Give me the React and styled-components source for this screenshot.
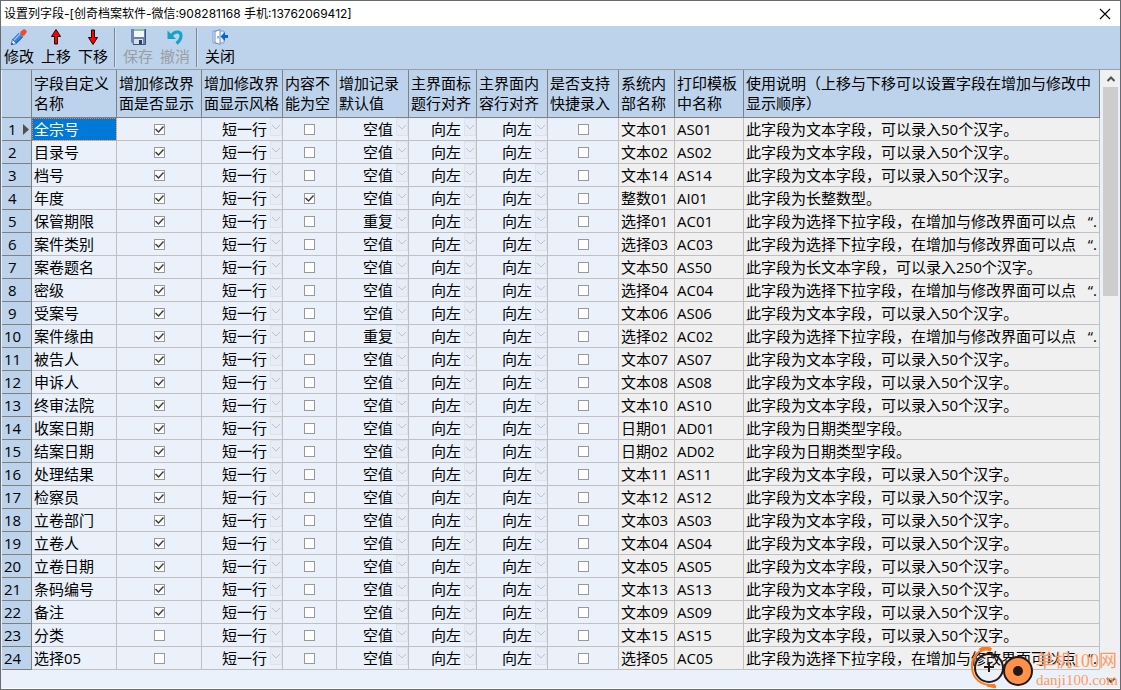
import React, { useState } from "react";
import styled, { createGlobalStyle } from "styled-components";

const Global = createGlobalStyle`
  * { box-sizing: border-box; }
  body { margin: 0; background: #fff; color: #000; }
  body, button, select, input { font-family: "Open Sans", "Noto Sans CJK SC", sans-serif; font-size: 15px; }
`;

const Window = styled.div`
  position: relative;
  display: flex;
  flex-direction: column;
  min-height: 100vh;
  border: 1px solid #676b72;
  background: #bcd3eb;
`;
const TitleBar = styled.header`
  display: flex;
  align-items: center;
  justify-content: space-between;
  height: 25px;
  padding: 0 8px 0 3px;
  background: #fff;
`;
const Title = styled.h1`
  margin: 0;
  font: 400 12px/20px Inter, "Noto Sans CJK SC", sans-serif;
  white-space: nowrap;
`;
const CloseButton = styled.button`
  display: flex;
  padding: 0;
  border: 0;
  background: none;
`;
const Toolbar = styled.nav`
  display: flex;
  gap: 1px;
  height: 44px;
  border-bottom: 1px solid #9a9fa5;
  background: #bcd3eb;
`;
const ToolButton = styled.button`
  display: flex;
  flex-direction: column;
  align-items: center;
  padding: 2px 3px 0;
  border: 0;
  background: none;
  color: #000;
  line-height: 20px;
  white-space: nowrap;
  &:disabled { color: #9b9ea3; }
  svg { display: block; }
`;
const Separator = styled.span`
  width: 2px;
  height: 39px;
  margin: 2px 3px 0 2px;
  border-left: 1px solid #7d868f;
  border-right: 1px solid #d3e2f2;
`;
const Body = styled.main`
  display: flex;
  flex: 1;
  padding-left: 1px;
  background: #eaf1fa;
  border-bottom: 1px solid #fff;
`;
const TableArea = styled.div`
  flex: 1;
  min-width: 0;
`;
const Table = styled.table`
  width: 100%;
  table-layout: fixed;
  border-collapse: separate;
  border-spacing: 0;
`;
const Col = styled.col`
  width: ${(p) => (p.$w ? `${p.$w}px` : "auto")};
`;
const HeadCell = styled.th`
  height: 48px;
  padding: 3px 0 4px 2px;
  border-right: 1px solid #808080;
  border-bottom: 1px solid #808080;
  background: #bcd3eb;
  font-weight: 400;
  line-height: 20px;
  text-align: left;
  vertical-align: top;
  white-space: pre-line;
`;
const RowHead = styled.th`
  height: 23px;
  padding: 0 2px;
  border-right: 1px solid #808080;
  border-bottom: 1px solid #808080;
  background: #bcd3eb;
  font-weight: 400;
  line-height: 22px;
  text-align: left;
`;
const RowMark = styled.span`
  display: flex;
  align-items: center;
  justify-content: space-between;
  padding-left: ${(p) => (p.$single ? "4px" : "0")};
`;
const Cell = styled.td`
  height: 23px;
  padding: 0 0 0 2px;
  border-right: 1px solid #c0c0c0;
  border-bottom: 1px solid #c0c0c0;
  background: ${(p) => (p.$locked ? "#f0f0f0" : "#eaf1fa")};
  line-height: 22px;
  overflow: hidden;
  white-space: pre;
`;
const SelectedCell = styled(Cell)`
  background: #0078d7;
  color: #fff;
  outline: 1px dotted #ff8728;
  outline-offset: -1px;
`;
const CheckCell = styled(Cell)`
  padding: 0;
`;
const CheckBox = styled.label`
  display: flex;
  justify-content: center;
  input {
    width: 11px;
    height: 11px;
    margin: 0;
    appearance: none;
    border: 1px solid #999;
    background: #fff;
  }
  svg { position: absolute; pointer-events: none; }
`;
const Picker = styled.span`
  display: flex;
  height: 22px;
`;
const Select = styled.select`
  flex: 1;
  min-width: 0;
  height: 22px;
  padding: 0 3px 0 0;
  border: 0;
  appearance: none;
  background: none;
  color: #000;
  line-height: 22px;
  text-align: right;
  text-align-last: right;
`;
const Drop = styled.span`
  display: flex;
  align-items: center;
  justify-content: center;
  width: 12px;
  height: 18px;
  border: 1px solid #dde3ec;
  background: #e6edf6;
`;
const Scrollbar = styled.div`
  display: flex;
  flex-direction: column;
  align-items: center;
  width: 15px;
  margin: 0 2px 0 3px;
  background: #f0f0f0;
`;
const ScrollButton = styled.button`
  display: flex;
  align-items: center;
  justify-content: center;
  width: 100%;
  height: 17px;
  padding: 0;
  border: 0;
  background: none;
`;
const Thumb = styled.div`
  width: 100%;
  height: 209px;
  background: #cdcdcd;
`;
const Track = styled.div`
  flex: 1;
`;
const Watermark = styled.div`
  position: absolute;
  right: 2px;
  bottom: 0;
  display: flex;
  align-items: flex-end;
  gap: 2px;
  color: #ff9a62;
  font-family: "Liberation Serif", "Noto Sans CJK SC", serif;
  pointer-events: none;
`;
const MarkText = styled.div`
  font-size: 15px;
  line-height: 18px;
  white-space: nowrap;
  strong { display: block; font-size: 18px; line-height: 20px; font-weight: 400; }
`;

const PencilIcon = () => (
  <svg width="18" height="18" viewBox="0 0 18 18" strokeLinecap="butt">
    <path d="M4.500 13.500L12.500 5.500" stroke="#1747a6" strokeWidth="6" />
    <path d="M4.500 13.500L12.500 5.500" stroke="#2f83ea" strokeWidth="4" />
    <path d="M3.800 12.200L11.500 4.500" stroke="#8cc8ff" strokeWidth="1.500" />
    <path d="M11 7L12.500 5.500" stroke="#e8eef6" strokeWidth="6" />
    <path d="M12.500 5.500L14.200 3.800" stroke="#e0503c" strokeWidth="5" strokeLinecap="round" />
    <path d="M2.400 11.500L6.500 15.600 1.300 16.700z" fill="#f2f6fb" stroke="#1747a6" strokeWidth=".7" />
    <path d="M1.800 14.600L3.400 16.200 1.300 16.700z" fill="#16356e" />
  </svg>
);
const ArrowIcon = ({ down }) => (
  <svg width="18" height="18" viewBox="0 0 18 18">
    <path transform={down ? "rotate(180 9 9)" : undefined} d="M9 1.500L13.500 8.500h-3v7.500h-3V8.500h-3z" fill="#f00" stroke="#200" />
  </svg>
);
const SaveIcon = () => (
  <svg width="18" height="18" viewBox="0 0 18 18">
    <path d="M2 1h15v15H4l-2-2z" fill="#6b83b3" />
    <path d="M5 1h10v8H5z" fill="#f3f7f8" />
    <path d="M5 1h10v2H5z" fill="#94bd9c" />
    <path d="M5 11h9v5H5z" fill="#d9dde5" />
    <path d="M10 12h3v4h-3z" fill="#2f3f64" />
    <path d="M16.500 1v15.500H4" fill="none" stroke="#3e4f77" />
  </svg>
);
const UndoIcon = () => (
  <svg width="18" height="18" viewBox="0 0 18 18">
    <path d="M1.500 2.500v8.500H10z" fill="#16a3c6" />
    <path d="M5.500 7.500C9 2.500 15.500 3 15 8.500c-.3 3-2 5-4.500 7" fill="none" stroke="#16a3c6" strokeWidth="3" />
  </svg>
);
const ExitIcon = () => (
  <svg width="18" height="18" viewBox="0 0 18 18">
    <path d="M2 3h11v12H2z" fill="#e4effc" stroke="#7f9fd0" />
    <path d="M4 3.500l5-2v15l-5-2z" fill="#fff" stroke="#6a8cc4" />
    <path d="M7 8v2.500" stroke="#385b9b" />
    <path d="M9.500 8.500l4.500-4.500v3h3v3h-3v3z" fill="#0868d0" />
  </svg>
);
const ChevronIcon = ({ up, dark }) => (
  <svg width="10" height="6" viewBox="0 0 10 6" fill="none" stroke={dark ? "#505050" : "#bcc3cd"} strokeWidth={dark ? 2 : 1}>
    <path d={up ? "M1.500 5L5 1.500 8.500 5" : "M1 1l4 4 4-4"} />
  </svg>
);

const heads = [
  ["字段自定义\n名称", 85],
  ["增加修改界\n面是否显示", 85],
  ["增加修改界\n面显示风格", 81],
  ["内容不\n能为空", 54],
  ["增加记录\n默认值", 72],
  ["主界面标\n题行对齐", 68],
  ["主界面内\n容行对齐", 71],
  ["是否支持\n快捷录入", 71],
  ["系统内\n部名称", 56],
  ["打印模板\n中名称", 69],
  ["使用说明（上移与下移可以设置字段在增加与修改中\n显示顺序）", 0],
];

const TEXT = "此字段为文本字段，可以录入50个汉字。";
const LONG = "此字段为长文本字段，可以录入250个汉字。";
const INT = "此字段为长整数型。";
const DATE = "此字段为日期类型字段。";
const PICK = "此字段为选择下拉字段，在增加与修改界面可以点   “.";

const rows = [
  ["全宗号", "文本01", "AS01", TEXT],
  ["目录号", "文本02", "AS02", TEXT],
  ["档号", "文本14", "AS14", TEXT],
  ["年度", "整数01", "AI01", INT],
  ["保管期限", "选择01", "AC01", PICK],
  ["案件类别", "选择03", "AC03", PICK],
  ["案卷题名", "文本50", "AS50", LONG],
  ["密级", "选择04", "AC04", PICK],
  ["受案号", "文本06", "AS06", TEXT],
  ["案件缘由", "选择02", "AC02", PICK],
  ["被告人", "文本07", "AS07", TEXT],
  ["申诉人", "文本08", "AS08", TEXT],
  ["终审法院", "文本10", "AS10", TEXT],
  ["收案日期", "日期01", "AD01", DATE],
  ["结案日期", "日期02", "AD02", DATE],
  ["处理结果", "文本11", "AS11", TEXT],
  ["检察员", "文本12", "AS12", TEXT],
  ["立卷部门", "文本03", "AS03", TEXT],
  ["立卷人", "文本04", "AS04", TEXT],
  ["立卷日期", "文本05", "AS05", TEXT],
  ["条码编号", "文本13", "AS13", TEXT],
  ["备注", "文本09", "AS09", TEXT],
  ["分类", "文本15", "AS15", TEXT],
  ["选择05", "选择05", "AC05", PICK],
];
const repeated = ["保管期限", "案件缘由"];

function Tick({ label, initial }) {
  const [on, setOn] = useState(initial);
  return (
    <CheckCell>
      <CheckBox>
        <input type="checkbox" aria-label={label} checked={on} onChange={() => setOn(!on)} />
        {on && (
          <svg width="11" height="11" viewBox="0 0 11 11" fill="none" stroke="#404040" strokeWidth="1.500">
            <path d="M1.500 5l3 3L9.500 2.500" />
          </svg>
        )}
      </CheckBox>
    </CheckCell>
  );
}

function Choice({ label, value, options }) {
  return (
    <Cell>
      <Picker>
        <Select aria-label={label} defaultValue={value}>
          {options.map((o) => <option key={o}>{o}</option>)}
        </Select>
        <Drop><ChevronIcon /></Drop>
      </Picker>
    </Cell>
  );
}

export default function App() {
  return (
    <Window lang="zh-CN">
      <Global />
      <TitleBar>
        <Title>设置列字段-[创奇档案软件-微信:908281168 手机:13762069412]</Title>
        <CloseButton aria-label="关闭窗口">
          <svg width="14" height="12" viewBox="0 0 14 12" stroke="#000" strokeWidth="1.100">
            <path d="M2 1l10 10M12 1L2 11" />
          </svg>
        </CloseButton>
      </TitleBar>
      <Toolbar>
        <ToolButton><PencilIcon />修改</ToolButton>
        <ToolButton><ArrowIcon />上移</ToolButton>
        <ToolButton><ArrowIcon down />下移</ToolButton>
        <Separator />
        <ToolButton disabled><SaveIcon />保存</ToolButton>
        <ToolButton disabled><UndoIcon />撤消</ToolButton>
        <Separator />
        <ToolButton><ExitIcon />关闭</ToolButton>
      </Toolbar>
      <Body>
        <TableArea>
          <Table>
            <colgroup>
              <Col $w={30} />
              {heads.map(([name, w]) => <Col key={name} $w={w} />)}
            </colgroup>
            <thead>
              <tr>
                <HeadCell />
                {heads.map(([name]) => <HeadCell key={name} scope="col">{name}</HeadCell>)}
              </tr>
            </thead>
            <tbody>
              {rows.map(([name, inner, print, note], i) => {
                const Name = i === 0 ? SelectedCell : Cell;
                return (
                  <tr key={name}>
                    <RowHead scope="row">
                      <RowMark $single={i < 9}>
                        {i + 1}
                        {i === 0 && (
                          <svg width="6" height="11" viewBox="0 0 6 11"><path d="M0 0l6 5.500L0 11z" fill="#505050" /></svg>
                        )}
                      </RowMark>
                    </RowHead>
                    <Name>{name}</Name>
                    <Tick label={`${name} 是否显示`} initial={i < 22} />
                    <Choice label={`${name} 显示风格`} value="短一行" options={["短一行", "长一行"]} />
                    <Tick label={`${name} 不能为空`} initial={i === 3} />
                    <Choice label={`${name} 默认值`} value={repeated.includes(name) ? "重复" : "空值"} options={["空值", "重复"]} />
                    <Choice label={`${name} 标题行对齐`} value="向左" options={["向左", "居中", "向右"]} />
                    <Choice label={`${name} 内容行对齐`} value="向左" options={["向左", "居中", "向右"]} />
                    <Tick label={`${name} 快捷录入`} initial={false} />
                    <Cell $locked>{inner}</Cell>
                    <Cell $locked>{print}</Cell>
                    <Cell $locked>{note}</Cell>
                  </tr>
                );
              })}
            </tbody>
          </Table>
        </TableArea>
        <Scrollbar>
          <ScrollButton aria-label="向上滚动"><ChevronIcon up dark /></ScrollButton>
          <Thumb />
          <Track />
          <ScrollButton aria-label="向下滚动"><ChevronIcon dark /></ScrollButton>
        </Scrollbar>
      </Body>
      <Watermark>
        <svg width="64" height="42" viewBox="0 0 64 42" fill="none">
          <path d="M10 3.500Q15-.5 21 3" stroke="#ff7a1c" strokeWidth="4" />
          <path d="M15 2C5 5 1 13 2 21c1 11 9 18 23 17" stroke="#ff7a1c" strokeWidth="2" />
          <path d="M17 38l9 2" stroke="#ff7a1c" strokeWidth="3" />
          <circle cx="19" cy="21" r="14" stroke="#231815" strokeWidth="2" />
          <path d="M19 15v10M14 20h10" stroke="#231815" strokeWidth="2" />
          <circle cx="48" cy="24" r="14" fill="#ff924a" stroke="#231815" strokeWidth="2" />
          <circle cx="48" cy="24" r="5" fill="#231815" />
        </svg>
        <MarkText><strong>单机100网</strong>danji100.com</MarkText>
      </Watermark>
    </Window>
  );
}
